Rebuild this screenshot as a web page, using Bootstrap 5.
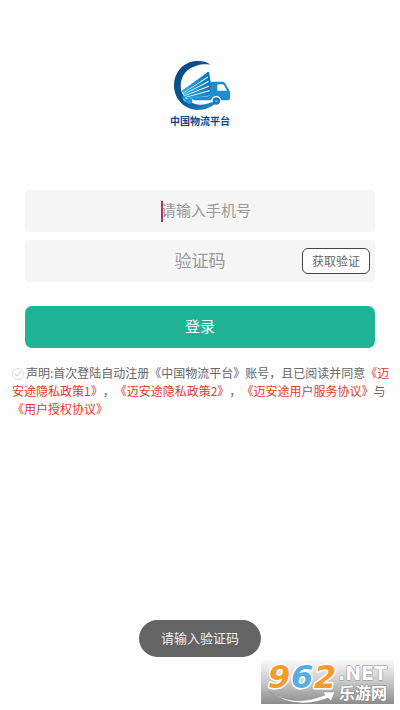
<!DOCTYPE html>
<html lang="zh-CN">
<head>
<meta charset="utf-8">
<meta name="viewport" content="width=device-width, initial-scale=1">
<title>中国物流平台</title>
<link href="https://cdn.jsdelivr.net/npm/bootstrap@5.3.0/dist/css/bootstrap.min.css" rel="stylesheet">
<style>
  body { font-family: "Noto Sans CJK SC", sans-serif; background: #fefefe; color: #666; text-spacing-trim: space-all; }
  .brand { padding-top: 50px; margin-bottom: 62px; }
  .brand-name { font-size: 10px; line-height: 14px; color: #0c4a86; margin-top: -1px; }
  .login-form { padding: 0 25px; }
  .field, .field:focus { background: #f5f5f5; border: 0; border-radius: 4px; height: 42px; padding: 0 0 4px; text-align: center; color: #555; box-shadow: none; }
  .field::placeholder { color: #999; opacity: 1; }
  .field-phone { font-size: 15px; padding-left: 12px !important; }
  .field-code { font-size: 17px; }
  .caret { width: 2px; height: 21px; background: #b0346a; left: calc(50% - 39px); }
  .btn-code, .btn-code:hover { font-size: 12px; line-height: 16px; padding: 4px 9px; color: #666; background: #fff; border: 1px solid #444; border-radius: 6px; right: 5px; }
  .btn-login, .btn-login:hover { font-size: 15px; line-height: 22px; padding: 9px 10px 11px; margin-top: 24px; color: #fff; background: #1db394; border: 0; border-radius: 7px; }
  .terms { font-size: 12px; line-height: 18px; padding: 16px 8px 0 12px; }
  .terms a { color: #dc3a28; text-decoration: none; }
  .agree { appearance: none; width: 12px; height: 12px; margin: 0 2px 0 0; border: 1px solid #ddd; border-radius: 50%; vertical-align: -2px;
    background: #fff url("data:image/svg+xml,%3Csvg xmlns='http://www.w3.org/2000/svg' viewBox='0 0 12 12'%3E%3Cpath d='M3 6l2 2 4-5' fill='none' stroke='%23ccc'/%3E%3C/svg%3E") center / 12px no-repeat; }
  .notice { bottom: 53px; font-size: 13px; line-height: 19px; padding: 8px 22px 10px; color: #eee; background: #646464; }
  .site-mark { right: 6px; bottom: 6px; }
</style>
<script src="https://cdn.jsdelivr.net/npm/bootstrap@5.3.0/dist/js/bootstrap.bundle.min.js"></script>
</head>
<body class="position-relative min-vh-100">
<main>
  <header class="brand d-flex flex-column align-items-center">
    <svg width="80" height="65" viewBox="0 0 240 195" aria-hidden="true">
      <defs>
        <linearGradient id="ring" x1="0" y1="0" x2="1" y2="1"><stop offset="0" stop-color="#07457f"/><stop offset=".5" stop-color="#0b5796"/><stop offset="1" stop-color="#218fd0"/></linearGradient>
        <linearGradient id="cargo" x1="0" y1="1" x2="1" y2="0"><stop offset="0" stop-color="#39b4e8"/><stop offset="1" stop-color="#0870b9"/></linearGradient>
      </defs>
      <path d="M152 44C137 33 119 31 101 34C66 40 42 70 42 106C42 147 73 179 112 180C137 180 157 171 170 157L154 157C142 163 129 165 117 164C86 162 62 138 62 108C62 78 81 54 109 47C124 42 138 42 152 44Z" fill="url(#ring)"/>
      <g fill="url(#cargo)">
        <path d="M64 123L144 66L147 77L70 128Z"/>
        <path d="M70 129L147 81L149 91L72 132Z"/>
        <path d="M69 134L149 95L151 105L70 138Z"/>
        <path d="M68 140L151 109L152 119L68 144Z"/>
        <path d="M63 146L152 123L154 136L100 145Z"/>
      </g>
      <path d="M142 66L147 66L158 134L152 144Z" fill="#0870b9"/>
      <path d="M152 95H188Q192 95 195 99L207 119Q210 123 210 129V145Q210 151 204 151H184Q181 138 169 138Q157 138 153 151H104L92 145L149 138Z" fill="#218bd0"/>
      <path d="M172 103H187Q190 103 192 106L201 122H172Z" fill="#f7fcff"/>
      <circle cx="169" cy="153" r="11" fill="#1479bf"/><circle cx="169" cy="153" r="4" fill="#4bafe0"/>
      <circle cx="88" cy="153" r="9" fill="#269ad8"/><path d="M68 145Q71 158 80 156L77 148Z" fill="#48bce9"/>
    </svg>
    <div class="brand-name fw-bold">中国物流平台</div>
  </header>

  <form class="login-form">
    <div class="position-relative d-flex align-items-center mb-2">
      <input class="form-control field field-phone" type="tel" placeholder="请输入手机号" aria-label="手机号">
      <span class="caret position-absolute" aria-hidden="true"></span>
    </div>
    <div class="position-relative d-flex align-items-center">
      <input class="form-control field field-code" type="text" placeholder="验证码" aria-label="验证码">
      <button class="btn btn-code position-absolute" type="button">获取验证</button>
    </div>
    <button class="btn btn-login w-100 d-block" type="button">登录</button>
  </form>

  <div class="terms"><input class="agree" type="checkbox" id="agree"><label class="d-inline" for="agree">声明:首次登陆自动注册《中国物流平台》账号，且已阅读并同意</label><a href="#">《迈安途隐私政策1》</a>，<a href="#">《迈安途隐私政策2》</a>，<a href="#">《迈安途用户服务协议》</a>与<a href="#">《用户授权协议》</a></div>
</main>

<div class="notice position-absolute start-50 translate-middle-x rounded-pill text-nowrap" role="status">请输入验证码</div>

<svg class="site-mark position-absolute" width="133" height="56" viewBox="0 -12 133 56" role="img" aria-label="962.NET 乐游网">
  <defs>
    <linearGradient id="shade" x1="0" y1="0" x2="0" y2="1"><stop offset="0" stop-color="#fafafa"/><stop offset=".5" stop-color="#c8c8c8"/><stop offset="1" stop-color="#8c8c8c"/></linearGradient>
  </defs>
  <rect width="133" height="44" fill="url(#shade)"/>
  <path d="M7 31Q32 48 64 35L62 32L74 32L70 41L67 38Q34 51 7 31Z" fill="#fff" stroke="#888" stroke-width=".5"/>
  <g font-family="DejaVu Sans, sans-serif" font-weight="bold" paint-order="stroke" stroke-linejoin="round">
    <g font-size="32" font-style="italic" stroke="#fff" stroke-width="3">
      <text x="7" y="28" fill="#f59a2d">9</text>
      <text x="30" y="28" fill="#54aee4">6</text>
      <text x="53" y="28" fill="#f59a2d">2</text>
    </g>
    <text x="77" y="20" font-size="19" fill="#fff" stroke="#888" stroke-width="1">.NET</text>
  </g>
  <text x="78" y="39" font-family="Noto Sans CJK SC, sans-serif" font-size="16" font-weight="bold" fill="#fff" stroke="#888" stroke-width="1" paint-order="stroke" stroke-linejoin="round">乐游网</text>
</svg>
</body>
</html>
